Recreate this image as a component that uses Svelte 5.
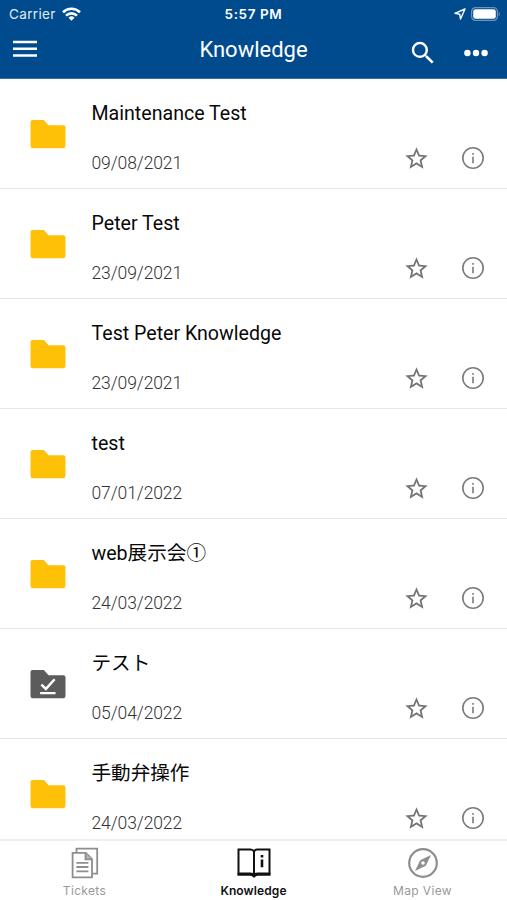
<script lang="ts">
  interface Entry {
    title: string;
    date: string;
    done?: boolean;
  }

  const entries: Entry[] = [
    { title: 'Maintenance Test', date: '09/08/2021' },
    { title: 'Peter Test', date: '23/09/2021' },
    { title: 'Test Peter Knowledge', date: '23/09/2021' },
    { title: 'test', date: '07/01/2022' },
    { title: 'web展示会①', date: '24/03/2022' },
    { title: 'テスト', date: '05/04/2022', done: true },
    { title: '手動弁操作', date: '24/03/2022' },
  ];
</script>

<div class="screen">
  <header>
    <div class="status">
      <div class="carrier">
        <span>Carrier</span>
        <svg width="19" height="14" viewBox="0 0 19 14" fill="none" stroke="white" stroke-width="2.6">
          <path d="M1 5.2a12.2 12.2 0 0 1 17 0"/>
          <path d="M4 8.6a7.9 7.9 0 0 1 11 0"/>
          <path d="M9.5 13.8 6.5 10.8a4.3 4.3 0 0 1 6 0z" fill="white" stroke="none"/>
        </svg>
      </div>
      <span class="clock">5:57 PM</span>
      <div class="power">
        <svg width="12" height="12" viewBox="0 0 12 12" fill="none" stroke="white" stroke-width="1.4" stroke-linejoin="round">
          <path d="M11 1 1 5.3l4.7.9.8 4.8z"/>
        </svg>
        <svg width="30" height="14" viewBox="0 0 30 14">
          <rect x=".6" y=".6" width="25.8" height="12.8" rx="4" fill="none" stroke="#6c94bf" stroke-width="1.2"/>
          <rect x="2.2" y="2.2" width="22.6" height="9.6" rx="2.4" fill="white"/>
          <path d="M27.7 4.7q2.4 2.3 0 4.6z" fill="#6c94bf"/>
        </svg>
      </div>
    </div>
    <div class="toolbar">
      <button class="menu" aria-label="Menu">
        <svg width="24" height="18" viewBox="0 0 24 18" stroke="white" stroke-width="2.5">
          <path d="M0 2h24M0 8.7h24M0 15.4h24"/>
        </svg>
      </button>
      <h1>Knowledge</h1>
      <div class="actions">
        <button aria-label="Search">
          <svg width="30" height="30" viewBox="0 0 24 24" fill="white">
            <path d="M15.5 14h-.79l-.28-.27A6.471 6.471 0 0 0 16 9.5 6.5 6.5 0 1 0 9.5 16c1.61 0 3.09-.59 4.23-1.57l.27.28v.79l5 4.99L20.49 19l-4.99-5zm-6 0C7.01 14 5 11.99 5 9.5S7.01 5 9.5 5 14 7.01 14 9.5 11.99 14 9.5 14z"/>
          </svg>
        </button>
        <button aria-label="More">
          <svg width="24" height="8" viewBox="0 0 24 8" fill="white">
            <circle cx="3.4" cy="4" r="3.2"/>
            <circle cx="12" cy="4" r="3.2"/>
            <circle cx="20.6" cy="4" r="3.2"/>
          </svg>
        </button>
      </div>
    </div>
  </header>

  <main>
    {#each entries as entry}
      <div class="row">
        <svg class="folder" class:done={entry.done} width="42" height="42" viewBox="0 0 24 24">
          <path d="M9.6 4H3.3C2.5 4 2 4.5 2 5.3v13.4C2 19.5 2.5 20.2 3.3 20.2h17.4c.8 0 1.3-.7 1.3-1.5V8.3C22 7.5 21.5 7 20.7 7h-8.4z"/>
          {#if entry.done}
            <path class="tick" d="m8.2 12.3 2.6 2.5 5-5.5M7.5 17.2h8.8"/>
          {/if}
        </svg>
        <div class="text">
          <div class="title">{entry.title}</div>
          <div class="date">{entry.date}</div>
        </div>
        <div class="row-actions">
          <button aria-label="Favourite">
            <svg width="27" height="27" viewBox="0 0 24 24" fill="#757575">
              <path d="m22 9.24-7.19-.62L12 2 9.19 8.63 2 9.24l5.46 4.73L5.82 21 12 17.27 18.18 21l-1.63-7.03zM12 15.4l-3.76 2.27 1-4.28-3.32-2.88 4.38-.38L12 6.1l1.71 4.04 4.38.38-3.32 2.88 1 4.28z"/>
            </svg>
          </button>
          <button class="info" aria-label="Info">
            <svg width="24" height="24" viewBox="0 0 24 24" fill="none" stroke="#7b7b7b" stroke-width="1.6">
              <circle cx="12" cy="12" r="10.2"/>
              <path d="M12 10.8v6.4M12 6.9v1.8"/>
            </svg>
          </button>
        </div>
      </div>
    {/each}
  </main>

  <nav>
    <button class="tab">
      <svg width="28" height="32" viewBox="0 0 28 32" fill="none" stroke="#8e8e8e" stroke-width="1.8">
        <path d="M5.5 5V1.6h20.7v25.1H22"/>
        <path d="M1.6 5.8h13.2l6.2 6.3v18.3H1.6z"/>
        <path d="M14.5 6v6.4H21" fill="#b5b5b5"/>
        <path d="M5.4 15.8h12M5.4 20h12M5.4 24.3h12"/>
      </svg>
      <span>Tickets</span>
    </button>
    <button class="tab active">
      <svg width="34" height="32" viewBox="0 0 34 32" fill="none" stroke="#111">
        <path stroke-width="2" d="M17 4.6Q16 2.6 13.5 2.6H1.5v24h12q2.5 0 3.5 1.5 1-1.5 3.5-1.5h12v-24h-12Q18 2.6 17 4.6zV28"/>
        <path stroke-width="2.7" d="M.5 27.4H13q2.2 0 4 1.7 1.8-1.7 4-1.7h12.5"/>
        <path stroke-width="2.6" d="M25 12.4v7.8M25 7.9v2.6"/>
      </svg>
      <span>Knowledge</span>
    </button>
    <button class="tab">
      <svg width="32" height="32" viewBox="0 0 32 32" fill="none" stroke="#8e8e8e">
        <circle cx="16" cy="16" r="13.8" stroke-width="2.2"/>
        <path d="m24 8-5.2 10.8L8 24l5.2-10.8z" fill="#8e8e8e" stroke="none"/>
        <circle cx="16" cy="16" r="1.8" fill="white" stroke="none"/>
      </svg>
      <span>Map View</span>
    </button>
  </nav>
</div>

<style>
  :global(body) {
    background: white;
  }

  .screen {
    display: flex;
    flex-direction: column;
    width: 507px;
    height: 900px;
    overflow: hidden;
    background: white;
    font-family: Roboto, "Noto Sans CJK JP", sans-serif;
  }

  button {
    display: flex;
    padding: 0;
    border: 0;
    background: none;
    font: inherit;
  }

  svg {
    display: block;
    flex: none;
  }

  header {
    flex: none;
    box-sizing: border-box;
    height: 79px;
    background: #004b8d;
    border-bottom: 1px solid #3470a8;
    color: white;
  }

  .status {
    display: grid;
    grid-template-columns: 1fr auto 1fr;
    align-items: center;
    height: 27px;
    padding: 0 6px 0 9px;
    font-family: Inter, sans-serif;
    font-size: 13.5px;
  }

  .carrier {
    display: flex;
    align-items: center;
    gap: 6px;
    color: #e3ecf5;
    letter-spacing: 0.35px;
  }

  .clock {
    margin-right: 3px;
    font-weight: 600;
    letter-spacing: 0.6px;
  }

  .power {
    display: flex;
    justify-content: flex-end;
    align-items: center;
    gap: 5px;
  }

  .toolbar {
    display: grid;
    grid-template-columns: 1fr auto 1fr;
    align-items: center;
    height: 46px;
    padding: 0 19px 0 13px;
  }

  h1 {
    margin: 0 0 2px 6px;
    font-size: 22px;
    font-weight: 400;
    letter-spacing: 0;
  }

  .menu {
    margin-bottom: 2px;
  }

  .actions {
    display: flex;
    justify-content: flex-end;
    align-items: center;
    gap: 26px;
    margin-top: 5px;
  }

  main {
    flex: 1;
    min-height: 0;
    overflow: hidden;
  }

  .row {
    display: flex;
    box-sizing: border-box;
    height: 110px;
    padding: 0 22px 0 26.5px;
    border-bottom: 1px solid #e8e8e8;
  }

  .folder {
    margin-top: 34px;
    fill: #ffc107;
  }

  .folder.done {
    fill: #5c5c5c;
  }

  .tick {
    fill: none;
    stroke: white;
    stroke-width: 1.4;
  }

  .text {
    flex: 1;
    margin-left: 23px;
  }

  .title {
    height: 28px;
    margin-top: 20.5px;
    color: #080808;
    font-size: 19.6px;
    line-height: 28px;
    letter-spacing: 0;
  }

  .date {
    margin-top: 23.5px;
    color: #333;
    font-size: 17.5px;
    font-weight: 300;
    line-height: 24px;
    letter-spacing: -0.1px;
  }

  .row-actions {
    display: flex;
    align-items: center;
    gap: 31px;
    height: 27px;
    margin-top: 66px;
  }

  .info {
    margin-bottom: 2px;
  }

  nav {
    display: grid;
    grid-template-columns: repeat(3, 1fr);
    flex: none;
    box-sizing: border-box;
    height: 61px;
    border-top: 2px solid #efefef;
    background: white;
  }

  .tab {
    flex-direction: column;
    align-items: center;
    padding-top: 6px;
    color: #999;
    font-family: Inter, sans-serif;
    font-size: 12px;
    line-height: 16px;
    letter-spacing: 0.35px;
  }

  .tab span {
    margin-top: 4px;
  }

  .active {
    color: #111;
    font-weight: 600;
    letter-spacing: 0.1px;
  }
</style>
